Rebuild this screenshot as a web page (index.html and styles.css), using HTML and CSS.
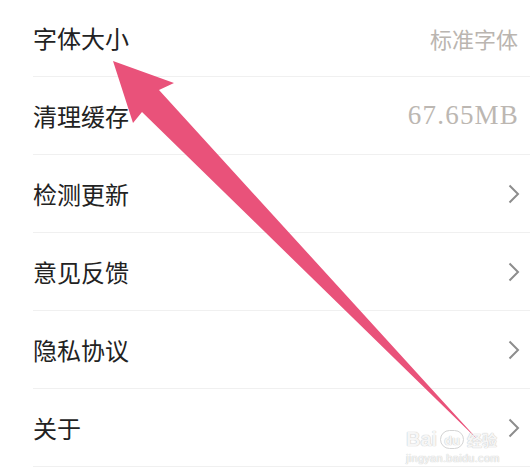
FILE: index.html
```html
<!DOCTYPE html>
<html>
<head>
	<meta charset="utf-8">
	<title>设置</title>
	<link rel="stylesheet" href="styles.css">
</head>
<body>
  <main class="screen">
    <ul class="settings">
      <li class="row"><span class="label">字体大小</span><span class="value">标准字体</span></li>
      <li class="row"><span class="label">清理缓存</span><span class="value size">67.65MB</span></li>
      <li class="row"><span class="label">检测更新</span><svg class="chev" viewBox="0 0 12 20"><polyline points="1.5,1.5 10,10 1.5,18.5"/></svg></li>
      <li class="row"><span class="label">意见反馈</span><svg class="chev" viewBox="0 0 12 20"><polyline points="1.5,1.5 10,10 1.5,18.5"/></svg></li>
      <li class="row"><span class="label">隐私协议</span><svg class="chev" viewBox="0 0 12 20"><polyline points="1.5,1.5 10,10 1.5,18.5"/></svg></li>
      <li class="row"><span class="label">关于</span><svg class="chev" viewBox="0 0 12 20"><polyline points="1.5,1.5 10,10 1.5,18.5"/></svg></li>
    </ul>

    <!-- annotation arrow drawn over the list -->
    <svg class="arrow" viewBox="0 0 530 476">
      <polygon points="113,61 174,83 159,90 479,441 142,112 133,123"/>
    </svg>

    <div class="mark">
      <div class="mark-top"><span class="bai">Bai</span><span class="paw">du</span><span class="jy">经验</span></div>
      <div class="mark-url">jingyan.baidu.com</div>
    </div>
  </main>
</body>
</html>
```

FILE: styles.css
```css
html body{
  margin: 0;
  background: #fff;
  overflow: hidden;
}

.screen{
  position: relative;
  width: 530px;
  height: 476px;
  overflow: hidden;
  font-family: "Noto Sans CJK SC", sans-serif;
}

.settings{
  list-style: none;
  margin: -1px 0 0 33px;
  padding: 0;
}

.row{
  height: 77px;
  border-bottom: 1px solid #f0f0f0;
  display: flex;
  align-items: center;
  justify-content: space-between;
  padding-right: 12px;
}

.label{
  font-size: 24px;
  color: #222;
}

.value{
  font-size: 22px;
  color: #bab5b0;
}

.size{
  font-family: "Liberation Serif", serif;
  font-size: 27px;
  letter-spacing: 1.2px;
  margin-right: -1px;
  color: #bcb7b2;
}

.chev{
  width: 12px;
  height: 20px;
  margin-right: -2px;
  fill: none;
  stroke: #8d8d8d;
  stroke-width: 2;
}

.arrow{
  position: absolute;
  left: 0;
  top: 0;
  width: 530px;
  height: 476px;
  fill: #e9527a;
}

.mark{
  position: absolute;
  left: 406px;
  top: 428px;
  font-family: "Liberation Sans", sans-serif;
  color: rgba(255,255,255,0.85);
  text-shadow: 0 0 1px #c9c9c9, 0 0 1px #c9c9c9;
}

.mark-top{
  display: flex;
  align-items: center;
  gap: 3px;
  height: 22px;
}

.bai{
  font-size: 20px;
  font-weight: bold;
}

.paw{
  font-size: 13px;
  font-weight: bold;
  border: 1px solid #d4d4d4;
  border-radius: 10px;
  padding: 2px 3px 0;
}

.jy{
  font-family: "Noto Sans CJK SC", sans-serif;
  font-size: 15px;
  font-weight: bold;
}

.mark-url{
  font-size: 11px;
  margin-top: 2px;
  letter-spacing: 0.3px;
}
```
